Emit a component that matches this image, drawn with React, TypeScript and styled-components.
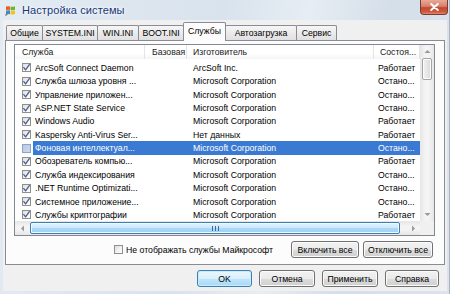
import React from "react";
import styled, { createGlobalStyle } from "styled-components";

const FONT = `"Liberation Sans", Arial, sans-serif`;

const Global = createGlobalStyle`
  html, body { margin: 0; padding: 0; }
  body { width: 450px; height: 294px; overflow: hidden; background: #d6e0ea; font-family: ${FONT}; }
  #root { width: 450px; height: 294px; }
`;

const Window = styled.div`
  box-sizing: border-box;
  width: 450px;
  height: 294px;
  display: flex;
  flex-direction: column;
  padding: 0 2px 3px 3px;
  border-right: 1px solid #a9b4c0;
  background: linear-gradient(100deg, #e3ebf3 0%, #d9e3ed 45%, #e6edf4 62%, #d5dfe9 78%, #dbe4ed 100%);
`;

const TitleBar = styled.div`
  height: 20px;
  display: flex;
  align-items: center;
  flex: none;
`;

const AppIcon = styled.svg`
  width: 11px;
  height: 11px;
  margin-left: 2px;
  flex: none;
`;

const Title = styled.div`
  margin-left: 6px;
  font-size: 11px;
  color: #173577;
  text-shadow: 0 0 4px #ffffff, 0 0 2px #ffffff;
  letter-spacing: 0.1px;
`;

const CloseButton = styled.div`
  margin-left: auto;
  margin-right: -1px;
  align-self: flex-start;
  box-sizing: border-box;
  width: 28px;
  height: 15px;
  border: 1px solid #7b3b32;
  border-top: none;
  border-radius: 0 0 4px 4px;
  background: linear-gradient(180deg, #e9a999 0%, #d8806c 45%, #c4472f 55%, #cf5a3f 85%, #e08a6e 100%);
  display: flex;
  align-items: center;
  justify-content: center;
`;

const Client = styled.div`
  flex: 1;
  display: flex;
  flex-direction: column;
  background: #f0f0f0;
  padding-top: 2px;
`;

const TabStrip = styled.div`
  height: 18px;
  margin: 0 2px;
  padding-left: 1px;
  display: flex;
  align-items: flex-end;
  position: relative;
  z-index: 1;
  flex: none;
`;

const Tab = styled.div<{ $w: number; $active?: boolean }>`
  box-sizing: border-box;
  width: ${(p) => p.$w}px;
  height: ${(p) => (p.$active ? 19 : 15)}px;
  margin-bottom: ${(p) => (p.$active ? -1 : 0)}px;
  margin-left: -1px;
  border: 1px solid #898c95;
  border-bottom: none;
  border-radius: 2px 2px 0 0;
  background: ${(p) =>
    p.$active ? "#fcfcfc" : "linear-gradient(180deg, #f6f6f6 0%, #ebebeb 50%, #e0e0e0 100%)"};
  font-size: 8.7px;
  color: #000;
  display: flex;
  align-items: ${(p) => (p.$active ? "flex-start" : "center")};
  padding-top: ${(p) => (p.$active ? 3 : 0)}px;
  justify-content: center;
  white-space: nowrap;
  position: relative;
  z-index: ${(p) => (p.$active ? 2 : 1)};
  &:first-child { margin-left: 0; }
`;

const Panel = styled.div`
  box-sizing: border-box;
  margin: 0 2px;
  height: 225px;
  border: 1px solid #898c95;
  background: #fcfcfc;
  padding: 3px 9px 0 8px;
  display: flex;
  flex-direction: column;
  flex: none;
`;

const List = styled.div`
  box-sizing: border-box;
  height: 192px;
  border: 1px solid #828790;
  background: #ffffff;
  display: flex;
  flex-direction: column;
  font-size: 8.7px;
`;

const ListTop = styled.div`
  height: 176px;
  display: flex;
  flex: none;
`;

const ListMain = styled.div`
  flex: 1;
  display: flex;
  flex-direction: column;
  overflow: hidden;
`;

const Header = styled.div`
  height: 14px;
  display: flex;
  flex: none;
  background: linear-gradient(180deg, #ffffff 0%, #ffffff 60%, #f4f5f7 100%);
`;

const HeaderCell = styled.div<{ $w: number; $pad: number }>`
  box-sizing: border-box;
  width: ${(p) => p.$w}px;
  padding-left: ${(p) => p.$pad}px;
  border-right: 1px solid #e3e4e6;
  display: flex;
  align-items: center;
  color: #202020;
  white-space: nowrap;
  overflow: hidden;
  flex: none;
`;

const Rows = styled.div`
  padding-top: 2.3px;
  flex: 1;
  overflow: hidden;
`;

const Row = styled.div`
  height: 13.36px;
  display: flex;
  align-items: center;
`;

const CheckCell = styled.div`
  box-sizing: border-box;
  width: 18px;
  padding-left: 7px;
  flex: none;
  display: flex;
  align-items: center;
`;

const RowBody = styled.div<{ $selected?: boolean }>`
  flex: 1;
  height: 100%;
  display: flex;
  align-items: center;
  background: ${(p) => (p.$selected ? "#3b7ad3" : "transparent")};
  color: ${(p) => (p.$selected ? "#ffffff" : "#000000")};
`;

const Cell = styled.div<{ $w: number; $pad: number }>`
  box-sizing: border-box;
  width: ${(p) => p.$w}px;
  padding-left: ${(p) => p.$pad}px;
  white-space: nowrap;
  overflow: hidden;
  flex: none;
`;

const Box = styled.div<{ $tone: "normal" | "selected" }>`
  box-sizing: border-box;
  width: 9px;
  height: 9px;
  border: 1px solid ${(p) => (p.$tone === "selected" ? "#8fa3c6" : "#8e8f8f")};
  background: ${(p) =>
    p.$tone === "selected"
      ? "linear-gradient(135deg, #b9c8e4 0%, #cdd8ec 100%)"
      : "linear-gradient(135deg, #dedede 0%, #f4f4f4 60%, #ffffff 100%)"};
  display: flex;
  align-items: center;
  justify-content: center;
  flex: none;
`;

const VScroll = styled.div`
  width: 14px;
  flex: none;
  display: flex;
  flex-direction: column;
  background: linear-gradient(90deg, #e6e6e6 0%, #f4f4f4 40%, #f4f4f4 60%, #e6e6e6 100%);
`;

const ArrowBtn = styled.div<{ $w: number; $h: number }>`
  width: ${(p) => p.$w}px;
  height: ${(p) => p.$h}px;
  flex: none;
  display: flex;
  align-items: center;
  justify-content: center;
`;

const VThumb = styled.div`
  box-sizing: border-box;
  margin: 0 2px 0 2px;
  height: 22px;
  border: 1px solid #a4a4a4;
  border-radius: 2px;
  background: linear-gradient(90deg, #f3f3f3 0%, #e6e6e6 50%, #d9d9d9 100%);
  box-shadow: inset 0 0 0 1px #fbfbfb;
  flex: none;
`;

const Spacer = styled.div`
  flex: 1;
`;

const ListBottom = styled.div`
  height: 14px;
  display: flex;
  flex: none;
`;

const HScroll = styled.div`
  flex: 1;
  display: flex;
  align-items: center;
  background: linear-gradient(180deg, #e6e6e6 0%, #f4f4f4 40%, #f4f4f4 60%, #e6e6e6 100%);
`;

const HThumb = styled.div`
  box-sizing: border-box;
  width: 370px;
  height: 12px;
  margin-left: 1px;
  border: 1px solid #3c7fb1;
  border-radius: 2px;
  background: linear-gradient(180deg, #e3f3fd 0%, #cbe8fb 50%, #aed9f6 51%, #9fd1f3 100%);
  box-shadow: inset 0 0 0 1px #f0f9ff;
  display: flex;
  align-items: center;
  justify-content: center;
  flex: none;
`;

const Corner = styled.div`
  width: 14px;
  flex: none;
  background: #f0f0f0;
`;

const OptionsRow = styled.div`
  margin-top: 5px;
  height: 17px;
  display: flex;
  align-items: center;
  justify-content: flex-end;
  padding-right: 2px;
  flex: none;
`;

const CheckLabel = styled.label`
  display: flex;
  align-items: center;
  gap: 3px;
  font-size: 8.7px;
  color: #000;
  margin-right: 18px;
`;

const Button = styled.div<{ $w: number; $default?: boolean }>`
  box-sizing: border-box;
  width: ${(p) => p.$w}px;
  height: 17px;
  border: 1px solid ${(p) => (p.$default ? "#3c7fb1" : "#707070")};
  border-radius: 3px;
  background: ${(p) =>
    p.$default
      ? "linear-gradient(180deg, #eaf6fd 0%, #d9f0fc 50%, #bee6fd 51%, #a7d9f5 100%)"
      : "linear-gradient(180deg, #f2f2f2 0%, #ebebeb 50%, #dddddd 51%, #cfcfcf 100%)"};
  box-shadow: inset 0 0 0 1px ${(p) => (p.$default ? "#cdeafc" : "#fcfcfc")};
  font-size: 8.7px;
  color: #000;
  display: flex;
  align-items: center;
  justify-content: center;
  white-space: nowrap;
  flex: none;
`;

const ButtonGroup = styled.div<{ $gap: number }>`
  display: flex;
  gap: ${(p) => p.$gap}px;
`;

const DialogButtons = styled.div`
  margin-top: 5px;
  height: 17px;
  display: flex;
  justify-content: flex-end;
  padding-right: 8px;
  flex: none;
`;

const CheckMark = () => (
  <svg width="7" height="7" viewBox="0 0 7 7">
    <path d="M0.8 3.6 L2.6 5.9 L6.3 0.6" fill="none" stroke="#4b6090" strokeWidth="1.3" strokeLinecap="round" strokeLinejoin="round" />
  </svg>
);

const Check = ({ checked, tone = "normal" }: { checked?: boolean; tone?: "normal" | "selected" }) => (
  <Box $tone={tone}>{checked && <CheckMark />}</Box>
);

const Arrow = ({ dir }: { dir: "up" | "down" | "left" | "right" }) => {
  const pts = {
    up: "0.5,4 3.5,1 6.5,4",
    down: "0.5,1 3.5,4 6.5,1",
    left: "4,0.5 1,3.5 4,6.5",
    right: "1,0.5 4,3.5 1,6.5",
  }[dir];
  const vertical = dir === "up" || dir === "down";
  return (
    <svg width={vertical ? 7 : 5} height={vertical ? 5 : 7} viewBox={vertical ? "0 0 7 5" : "0 0 5 7"}>
      <polygon points={pts} fill="#9a9a9a" />
    </svg>
  );
};

const Grip = () => (
  <svg width="7" height="5" viewBox="0 0 7 5">
    <rect x="0" y="0" width="1" height="5" fill="#3d6e9a" />
    <rect x="3" y="0" width="1" height="5" fill="#3d6e9a" />
    <rect x="6" y="0" width="1" height="5" fill="#3d6e9a" />
  </svg>
);

const tabs = [
  { label: "Общие", w: 37 },
  { label: "SYSTEM.INI", w: 56 },
  { label: "WIN.INI", w: 42 },
  { label: "BOOT.INI", w: 46 },
  { label: "Службы", w: 43, active: true },
  { label: "Автозагрузка", w: 72 },
  { label: "Сервис", w: 41 },
];

const columns = [
  { label: "Служба", w: 130, pad: 7 },
  { label: "Базовая", w: 42, pad: 7 },
  { label: "Изготовитель", w: 187, pad: 6 },
  { label: "Состоя...", w: 46, pad: 6 },
];

const MS = "Microsoft Corporation";
const RUN = "Работает";
const STOP = "Остано...";

const services = [
  { name: "ArcSoft Connect Daemon", maker: "ArcSoft Inc.", state: RUN, on: true },
  { name: "Служба шлюза уровня ...", maker: MS, state: STOP, on: true },
  { name: "Управление приложен...", maker: MS, state: STOP, on: true },
  { name: "ASP.NET State Service", maker: MS, state: STOP, on: true },
  { name: "Windows Audio", maker: MS, state: RUN, on: true },
  { name: "Kaspersky Anti-Virus Ser...", maker: "Нет данных", state: RUN, on: true },
  { name: "Фоновая интеллектуал...", maker: MS, state: STOP, on: false, selected: true },
  { name: "Обозреватель компью...", maker: MS, state: RUN, on: true },
  { name: "Служба индексирования", maker: MS, state: STOP, on: true },
  { name: ".NET Runtime Optimizati...", maker: MS, state: STOP, on: true },
  { name: "Системное приложение...", maker: MS, state: STOP, on: true },
  { name: "Службы криптографии", maker: MS, state: RUN, on: true },
];

export default function App() {
  return (
    <>
      <Global />
      <Window>
        <TitleBar>
          <AppIcon viewBox="0 0 11 11">
            <path d="M1 1.6 Q3 0.8 5 1.4 L5 5 Q3 4.4 1 5.2 Z" fill="#f25a24" />
            <path d="M5.6 1.5 Q7.8 2.1 10 1.2 L10 4.8 Q7.8 5.7 5.6 5.1 Z" fill="#6fb52c" />
            <path d="M1 5.8 Q3 5 5 5.6 L5 9.2 Q3 8.6 1 9.4 Z" fill="#2f8fdc" />
            <path d="M5.6 5.7 Q7.8 6.3 10 5.4 L10 9 Q7.8 9.9 5.6 9.3 Z" fill="#f7c21a" />
            <path d="M0.5 10.5 L4 7" stroke="#7a7a7a" strokeWidth="1.4" />
          </AppIcon>
          <Title>Настройка системы</Title>
          <CloseButton>
            <svg width="9" height="8" viewBox="0 0 9 8">
              <path d="M1.2 1 L7.8 7 M7.8 1 L1.2 7" stroke="#ffffff" strokeWidth="1.9" strokeLinecap="round" />
            </svg>
          </CloseButton>
        </TitleBar>
        <Client>
          <TabStrip>
            {tabs.map((t) => (
              <Tab key={t.label} $w={t.w} $active={t.active}>
                {t.label}
              </Tab>
            ))}
          </TabStrip>
          <Panel>
            <List>
              <ListTop>
                <ListMain>
                  <Header>
                    {columns.map((c) => (
                      <HeaderCell key={c.label} $w={c.w} $pad={c.pad}>
                        {c.label}
                      </HeaderCell>
                    ))}
                  </Header>
                  <Rows>
                    {services.map((s) => (
                      <Row key={s.name}>
                        <CheckCell>
                          <Check checked={s.on} tone={s.selected ? "selected" : "normal"} />
                        </CheckCell>
                        <RowBody $selected={s.selected}>
                          <Cell $w={112} $pad={2}>{s.name}</Cell>
                          <Cell $w={42} $pad={6}></Cell>
                          <Cell $w={187} $pad={6}>{s.maker}</Cell>
                          <Cell $w={46} $pad={4}>{s.state}</Cell>
                        </RowBody>
                      </Row>
                    ))}
                  </Rows>
                </ListMain>
                <VScroll>
                  <ArrowBtn $w={14} $h={13}>
                    <Arrow dir="up" />
                  </ArrowBtn>
                  <VThumb />
                  <Spacer />
                  <ArrowBtn $w={14} $h={13}>
                    <Arrow dir="down" />
                  </ArrowBtn>
                </VScroll>
              </ListTop>
              <ListBottom>
                <HScroll>
                  <ArrowBtn $w={14} $h={13}>
                    <Arrow dir="left" />
                  </ArrowBtn>
                  <HThumb>
                    <Grip />
                  </HThumb>
                  <Spacer />
                  <ArrowBtn $w={14} $h={13}>
                    <Arrow dir="right" />
                  </ArrowBtn>
                </HScroll>
                <Corner />
              </ListBottom>
            </List>
            <OptionsRow>
              <CheckLabel>
                <Check />
                Не отображать службы Майкрософт
              </CheckLabel>
              <ButtonGroup $gap={4}>
                <Button $w={68}>Включить все</Button>
                <Button $w={70}>Отключить все</Button>
              </ButtonGroup>
            </OptionsRow>
          </Panel>
          <DialogButtons>
            <ButtonGroup $gap={7}>
              <Button $w={55} $default>OK</Button>
              <Button $w={56}>Отмена</Button>
              <Button $w={56}>Применить</Button>
              <Button $w={54}>Справка</Button>
            </ButtonGroup>
          </DialogButtons>
        </Client>
      </Window>
    </>
  );
}
